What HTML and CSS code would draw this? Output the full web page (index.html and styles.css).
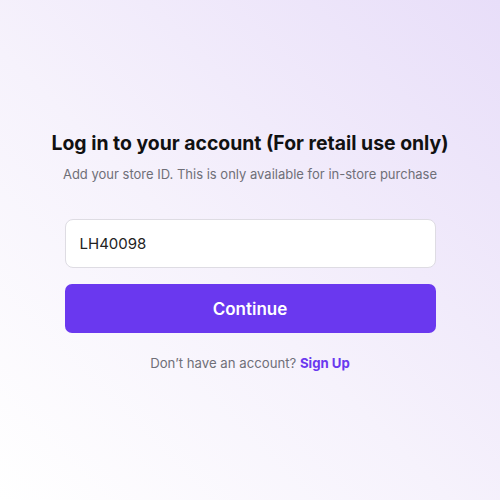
FILE: index.html
```html
<!DOCTYPE html>
<html>
<head>
<meta charset="utf-8">
<link rel="stylesheet" href="styles.css">
</head>
<body>
<main class="page">
  <section class="card">
    <h1 class="title">Log in to your account (For retail use only)</h1>
    <p class="subtitle">Add your store ID. This is only available for in-store purchase</p>
    <div class="field">LH40098</div>
    <button class="btn">Continue</button>
    <p class="signup">Don’t have an account? <a class="link">Sign Up</a></p>
  </section>
</main>
</body>
</html>
```
FILE: styles.css
```css
html, body {
  margin: 0;
  padding: 0;
  width: 500px;
  height: 500px;
  overflow: hidden;
}
body {
  font-family: Inter, "Noto Sans", sans-serif;
  background: linear-gradient(to bottom left, #e8def9 0%, #f6f2fc 55%, #ffffff 100%);
}
.page {
  height: 500px;
  display: flex;
  justify-content: center;
}
.card {
  width: 371px;
  padding-top: 129px;
  display: flex;
  flex-direction: column;
  align-items: center;
}
.title {
  margin: 0;
  font-size: 19.4px;
  font-weight: 700;
  color: #111;
  white-space: nowrap;
  line-height: 28px;
}
.subtitle {
  margin: 7px 0 0;
  font-size: 13px;
  color: #6f6f78;
  line-height: 20px;
  white-space: nowrap;
}
.field {
  box-sizing: border-box;
  margin-top: 35px;
  width: 100%;
  height: 49px;
  background: #fff;
  border: 1px solid #dedce3;
  border-radius: 8px;
  padding: 0 14px;
  display: flex;
  align-items: center;
  font-size: 15px;
  color: #222;
}
.btn {
  margin-top: 16px;
  width: 100%;
  height: 49px;
  border: none;
  border-radius: 7px;
  background: #6a38ef;
  color: #fff;
  font-family: inherit;
  font-size: 17px;
  font-weight: 600;
}
.signup {
  margin: 20px 0 0;
  font-size: 13.2px;
  color: #6f6f78;
  line-height: 20px;
}
.link {
  color: #6a38ef;
  font-weight: 700;
}
```
